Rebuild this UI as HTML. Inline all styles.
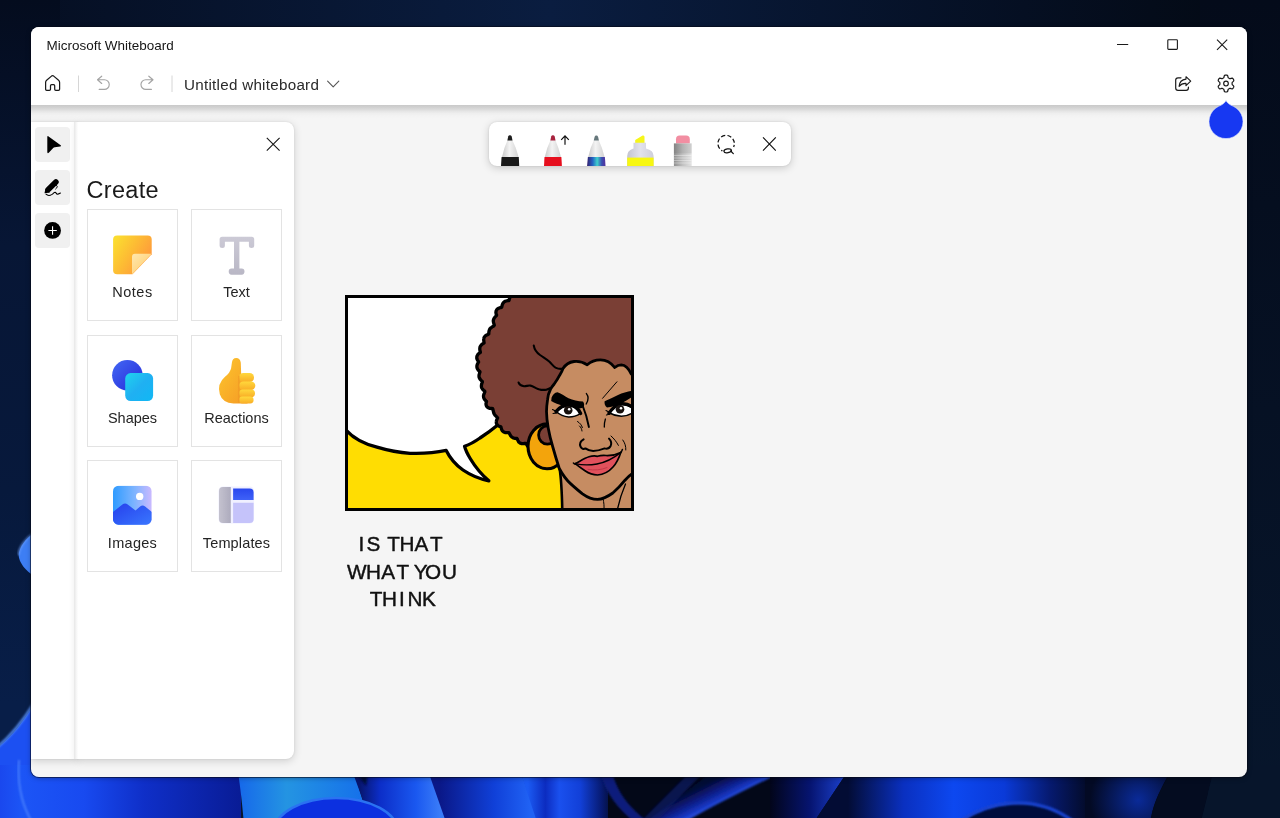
<!DOCTYPE html>
<html lang="en">
<head>
<meta charset="utf-8">
<title>Microsoft Whiteboard</title>
<style>
*{box-sizing:border-box;margin:0;padding:0}
html,body{width:1280px;height:818px;overflow:hidden;background:#050d1f;font-family:"Liberation Sans",sans-serif;color:#1b1b1b}
#wall{position:absolute;left:0;top:0;width:1280px;height:818px}
#win{will-change:transform;position:absolute;left:31px;top:27px;width:1216px;height:750px;background:#f5f5f5;border-radius:8px;overflow:hidden}
#winshadow{position:absolute;left:31px;top:27px;width:1216px;height:750px;border-radius:8px;box-shadow:0 0 0 1px rgba(6,10,24,.55),0 1px 5px rgba(0,0,0,.35)}
#hdr{position:absolute;left:0;top:0;width:100%;height:78px;background:#fff}
#hshadow{position:absolute;left:0;top:78px;width:100%;height:14px;background:linear-gradient(#c9c9c9 0%,#d2d2d2 18%,#dbdbdb 32%,#e6e6e6 46%,#eeeeee 60%,#f3f3f3 78%,#f5f5f5 100%)}
.abs{position:absolute}
#title{left:15.5px;top:10.5px;font-size:13.47px;line-height:16px;color:#151515;white-space:nowrap}
#doc{left:153px;top:48.8px;font-size:15.2px;line-height:18px;letter-spacing:.27px;color:#2a2a2a;white-space:nowrap}
#ovl{position:absolute;left:0;top:0;width:1216px;height:750px;pointer-events:none}
#side{position:absolute;left:0;top:95px;width:47px;height:637px;background:#fff;box-shadow:0 2px 8px rgba(0,0,0,.16),0 0 2px rgba(0,0,0,.10)}
.sbtn{position:absolute;left:4.2px;width:35px;height:34.5px;background:#f0f0f0;border-radius:4px}
#gut{position:absolute;left:42.8px;top:95px;width:4.2px;height:637px;z-index:3;background:linear-gradient(90deg,#e7e7e7 0%,#ededed 25%,#f6f6f6 60%,#fefefe 100%)}
#panel{position:absolute;left:46px;top:95px;width:217px;height:637px;background:#fff;border-radius:0 8px 8px 0;box-shadow:0 2px 8px rgba(0,0,0,.16),0 0 2px rgba(0,0,0,.10)}
#create{left:9.6px;top:53.5px;font-size:23.5px;line-height:28px;letter-spacing:.3px;color:#1a1a1a;white-space:nowrap}
.card{position:absolute;width:91px;height:112px;border:1px solid #e3e3e3;background:#fff}
.card span{position:absolute;left:0;width:100%;top:73px;text-align:center;font-size:14.5px;line-height:18px;color:#242424;white-space:nowrap}
.card svg{position:absolute;left:20px;top:20px;width:50px;height:50px}
#pens{position:absolute;left:458px;top:95px;width:302px;height:43.6px;background:#fff;border-radius:8px;box-shadow:0 2px 8px rgba(0,0,0,.18),0 0 2px rgba(0,0,0,.12);overflow:hidden}
#pens svg{position:absolute;left:0;top:0;width:302px;height:44px}
#comic{position:absolute;left:314px;top:268px;width:289px;height:216px}
</style>
</head>
<body>
<svg id="wall" viewBox="0 0 1280 818">
<defs>
<linearGradient id="wg" x1="0" y1="0" x2="1" y2="0"><stop offset="0" stop-color="#050e21"/><stop offset=".43" stop-color="#0a1d40"/><stop offset=".8" stop-color="#050f22"/><stop offset="1" stop-color="#030912"/></linearGradient>
<linearGradient id="wl" x1="0" y1="0" x2="0" y2="1"><stop offset="0" stop-color="#040c1e"/><stop offset=".3" stop-color="#071635"/><stop offset=".6" stop-color="#07193c"/><stop offset=".86" stop-color="#081e48"/></linearGradient>
<linearGradient id="wr" x1="0" y1="0" x2="0" y2="1"><stop offset="0" stop-color="#040b1a"/><stop offset=".5" stop-color="#061124"/><stop offset="1" stop-color="#07162c"/></linearGradient>
</defs>
<rect width="1280" height="818" fill="url(#wg)"/>
<rect x="0" y="0" width="60" height="818" fill="url(#wl)"/>
<rect x="1200" y="0" width="80" height="818" fill="url(#wr)"/>
<defs>
<filter id="b1" x="-10%" y="-10%" width="120%" height="120%"><feGaussianBlur stdDeviation="1.2"/></filter>
<filter id="b3" x="-10%" y="-10%" width="120%" height="120%"><feGaussianBlur stdDeviation="3"/></filter>
<linearGradient id="wA" gradientUnits="userSpaceOnUse" x1="0" y1="0" x2="240" y2="0"><stop offset="0" stop-color="#1a48ee"/><stop offset=".09" stop-color="#1c55f6"/><stop offset=".35" stop-color="#184af0"/><stop offset=".6" stop-color="#0f2fc8"/><stop offset="1" stop-color="#091c96"/></linearGradient>
<linearGradient id="wB" gradientUnits="userSpaceOnUse" x1="238" y1="0" x2="360" y2="0"><stop offset="0" stop-color="#1668ea"/><stop offset=".4" stop-color="#2494e2"/><stop offset="1" stop-color="#1672ea"/></linearGradient>
<linearGradient id="wC" gradientUnits="userSpaceOnUse" x1="360" y1="0" x2="440" y2="0"><stop offset="0" stop-color="#071670"/><stop offset=".25" stop-color="#0c2ec8"/><stop offset=".7" stop-color="#1a58f0"/><stop offset="1" stop-color="#3a7cf8"/></linearGradient>
<linearGradient id="wD" gradientUnits="userSpaceOnUse" x1="440" y1="0" x2="530" y2="0"><stop offset="0" stop-color="#0a1888"/><stop offset=".6" stop-color="#1040d8"/><stop offset="1" stop-color="#2062f4"/></linearGradient>
<linearGradient id="wE" gradientUnits="userSpaceOnUse" x1="528" y1="0" x2="615" y2="0"><stop offset="0" stop-color="#1b5af2"/><stop offset=".2" stop-color="#0c2cc0"/><stop offset=".36" stop-color="#1a50ee"/><stop offset=".6" stop-color="#1240d8"/><stop offset=".85" stop-color="#071a70"/><stop offset="1" stop-color="#030a20"/></linearGradient>
<linearGradient id="wF" gradientUnits="userSpaceOnUse" x1="681" y1="796" x2="692" y2="818"><stop offset="0" stop-color="#040a34"/><stop offset=".45" stop-color="#0b1c84"/><stop offset=".8" stop-color="#1736c0"/><stop offset="1" stop-color="#2c54e6"/></linearGradient>
<linearGradient id="wG" gradientUnits="userSpaceOnUse" x1="770" y1="0" x2="850" y2="0"><stop offset="0" stop-color="#02051a"/><stop offset=".5" stop-color="#061470"/><stop offset="1" stop-color="#1f48dc"/></linearGradient>
<linearGradient id="wH" gradientUnits="userSpaceOnUse" x1="848" y1="0" x2="1100" y2="0"><stop offset="0" stop-color="#030c34"/><stop offset=".22" stop-color="#0a30c0"/><stop offset=".42" stop-color="#0d48f0"/><stop offset=".62" stop-color="#0a3ad8"/><stop offset=".8" stop-color="#061a70"/><stop offset=".96" stop-color="#030a24"/><stop offset="1" stop-color="#030a24"/></linearGradient>
<radialGradient id="wI" gradientUnits="userSpaceOnUse" cx="1138" cy="800" r="48"><stop offset="0" stop-color="#0a2a98"/><stop offset="1" stop-color="#030a24"/></radialGradient>
</defs>
<!-- left blue mass -->
<path d="M-5 750 C10 738 22 724 34 704 L34 825 L-5 825Z" fill="#1c50f2"/>
<path d="M-5 749 C10 737 22 723 34 703" fill="none" stroke="#5a94ff" stroke-width="2.4" filter="url(#b1)"/>
<path d="M34 533 C26 538 19 547 18.6 555 C19 563 26 571 34 576Z" fill="#3d7ef4"/>
<path d="M34 533 C26 538 19 547 18.6 555" fill="none" stroke="#6ea2ff" stroke-width="1.4" filter="url(#b1)"/>
<!-- bottom strip -->
<g>
<rect x="-5" y="765" width="246" height="60" fill="url(#wA)"/>

<path d="M19 760 C17 785 22 805 32 822" fill="none" stroke="#5c92ff" stroke-width="1.6" filter="url(#b1)" opacity=".8"/>
<path d="M237 765 C240 785 242 800 244 825 L370 825 L352 765Z" fill="url(#wB)"/>
<path d="M350 765 L372 825 L450 825 L426 765Z" fill="url(#wC)"/>
<path d="M354 770 L368 770 L366 786 Z" fill="#04103a" filter="url(#b1)"/>
<ellipse cx="336" cy="832" rx="62" ry="34" fill="#0c30e0" stroke="#2a72f2" stroke-width="2.5"/>
<path d="M426 765 L447 825 L540 825 L518 765Z" fill="url(#wD)"/>
<path d="M518 765 L538 825 L630 825 L612 765Z" fill="url(#wE)"/>
<rect x="608" y="765" width="600" height="60" fill="#030818"/>
<path d="M640 826 L678 826 C712 806 745 790 782 772 L712 772Z" fill="url(#wF)" filter="url(#b1)"/>
<path d="M636 826 L652 826 L704 772 L690 772Z" fill="#0a1a66" opacity=".7" filter="url(#b1)"/><path d="M600 772 C606 795 620 812 640 826 L655 826 C632 812 618 795 612 772Z" fill="#0b1f7c" filter="url(#b1)"/>
<path d="M770 765 L770 825 L812 825 L852 765Z" fill="url(#wG)"/>
<path d="M852 765 L812 825 L1110 825 L1110 765Z" fill="url(#wH)"/>
<path d="M955 825 C985 802 1035 790 1078 825Z" fill="#030a3c" filter="url(#b1)"/>
<path d="M955 825 C985 802 1035 790 1078 825" fill="none" stroke="#1c48dc" stroke-width="3" filter="url(#b1)"/>
<path d="M1085 765 L1085 825 L1150 825 C1152 805 1160 790 1170 772 L1170 765Z" fill="url(#wI)"/>

<path d="M1150 825 C1152 805 1160 790 1172 770 L1176 765 L1215 765 L1200 825Z" fill="#040c20"/><path d="M1200 825 L1215 765 L1290 765 L1290 825Z" fill="#07152b"/>
</g>

</svg>
<div id="winshadow"></div>
<div id="win">
  <div id="hdr">
    <div id="title" class="abs">Microsoft Whiteboard</div>
    <div id="doc" class="abs">Untitled whiteboard</div>
  </div>
  <div id="hshadow"></div>

  <div id="side">
    <div class="sbtn" style="top:5px"></div>
    <div class="sbtn" style="top:48px"></div>
    <div class="sbtn" style="top:91px"></div>
  </div>
  <div id="gut"></div>

  <div id="panel">
    <div id="create" class="abs">Create</div>
    <div class="card" style="left:10px;top:87px"><span style="letter-spacing:.5px">Notes</span>
      <svg viewBox="108 230.2 50 50"><defs><linearGradient id="n1" x1="0" y1=".2" x2="1" y2=".8"><stop offset="0" stop-color="#fbdc30"/><stop offset=".45" stop-color="#fdba34"/><stop offset="1" stop-color="#ff8f3e"/></linearGradient><linearGradient id="n2" x1="0" y1="0" x2="1" y2="1"><stop offset="0" stop-color="#ffe7ae"/><stop offset=".5" stop-color="#ffd98a"/></linearGradient></defs>
      <path d="M117.1 235.7 H147.7 Q151.7 235.7 151.7 239.7 V254.5 L132.5 274.4 H117.1 Q113.1 274.4 113.1 270.4 V239.7 Q113.1 235.7 117.1 235.7Z" fill="url(#n1)"/>
      <path d="M135 253.9 H151.7 L132 274.4 V256.9 Q132 253.9 135 253.9Z" fill="url(#n2)"/></svg></div>
    <div class="card" style="left:114px;top:87px"><span>Text</span>
      <svg viewBox="211.5 229.7 50 50"><defs><linearGradient id="t1" x1="0" y1="0" x2="0" y2="1"><stop offset="0" stop-color="#cccad6"/><stop offset="1" stop-color="#b9b7c5"/></linearGradient></defs>
      <path d="M221.6 236.4 H251.2 Q253.7 236.4 253.7 238.9 V245.3 Q253.7 247.8 251 247.8 Q248.4 247.8 248.4 245.3 V241.4 H238.9 V268.3 H241.2 Q244 268.3 244 271.3 Q244 274.4 241.2 274.4 H231 Q228.2 274.4 228.2 271.3 Q228.2 268.3 231 268.3 H233.5 V241.4 H224.4 V245.3 Q224.4 247.8 221.8 247.8 Q219.1 247.8 219.1 245.3 V238.9 Q219.1 236.4 221.6 236.4Z" fill="url(#t1)"/></svg></div>
    <div class="card" style="left:10px;top:212.5px"><span>Shapes</span>
      <svg viewBox="108 355.7 50 50"><defs><linearGradient id="s1" x1="0" y1="0" x2="1" y2="1"><stop offset="0" stop-color="#4368f4"/><stop offset="1" stop-color="#2428d8"/></linearGradient><linearGradient id="s2" x1="0" y1="0" x2="1" y2="1"><stop offset="0" stop-color="#1fd3ee"/><stop offset=".5" stop-color="#20b0f2"/><stop offset="1" stop-color="#10b8f4"/></linearGradient></defs>
      <circle cx="127.4" cy="375" r="15.3" fill="url(#s1)"/><rect x="125.2" y="372.8" width="27.9" height="27.9" rx="5.5" fill="url(#s2)"/></svg></div>
    <div class="card" style="left:114px;top:212.5px"><span>Reactions</span>
      <svg viewBox="211.5 355.2 50 50"><defs><linearGradient id="r1" x1="0" y1="0" x2="1" y2="1"><stop offset="0" stop-color="#fdc62d"/><stop offset="1" stop-color="#f59a25"/></linearGradient><linearGradient id="r2" x1="0" y1="0" x2="0" y2="1"><stop offset="0" stop-color="#ffd83c"/><stop offset="1" stop-color="#f9ad27"/></linearGradient></defs>
      <path d="M231.4 362 Q231.8 357.3 235.7 357.3 Q239.7 357.3 240.3 362 L240.7 374 H247 V402.6 H233 Q222 402.2 219.3 393.5 Q216.3 383 224.5 376 Q229.6 372 230.6 367.5Z" fill="url(#r1)"/>
      <rect x="238.5" y="372.3" width="15" height="9" rx="4.3" fill="url(#r2)"/><rect x="238.5" y="380.6" width="16.3" height="8.6" rx="4.2" fill="url(#r2)"/><rect x="238.5" y="388.6" width="16" height="7.8" rx="3.9" fill="url(#r2)"/><rect x="238.5" y="395.8" width="14.6" height="6.9" rx="3.4" fill="url(#r2)"/>
      <path d="M238.4 375 V402" stroke="#ee9524" stroke-width="1.2" opacity=".7"/></svg></div>
    <div class="card" style="left:10px;top:338px"><span style="letter-spacing:.3px">Images</span>
      <svg viewBox="108.1 481.4 50 50"><defs><linearGradient id="i1" x1="0" y1="0" x2="1" y2="0"><stop offset="0" stop-color="#2f9bff"/><stop offset=".55" stop-color="#7db4ff"/><stop offset="1" stop-color="#cbb9ff"/></linearGradient><linearGradient id="i2" x1="0" y1="0" x2="1" y2="1"><stop offset="0" stop-color="#2640ec"/><stop offset="1" stop-color="#3a78ff"/></linearGradient><clipPath id="ic"><rect x="113.1" y="486.1" width="38.6" height="39" rx="5.5"/></clipPath></defs>
      <g clip-path="url(#ic)"><rect x="113" y="486" width="39" height="40" fill="url(#i1)"/>
      <path d="M113 512.5 L122.5 505 Q125.2 503 127.8 505 L135.6 510.8 L140.2 506.8 Q142.7 505 145.2 506.8 L152 512.5 V526 H113Z" fill="url(#i2)"/>
      <circle cx="139.8" cy="496.8" r="3.7" fill="#fff"/></g></svg></div>
    <div class="card" style="left:114px;top:338px"><span style="letter-spacing:.15px">Templates</span>
      <svg viewBox="212.1 480.7 50 50"><defs><linearGradient id="p1" x1="0" y1="0" x2="1" y2="0"><stop offset="0" stop-color="#c4c2cf"/><stop offset="1" stop-color="#adabbd"/></linearGradient><linearGradient id="p2" x1="0" y1="0" x2="0" y2="1"><stop offset="0" stop-color="#2947ee"/><stop offset="1" stop-color="#3f62f8"/></linearGradient></defs>
      <rect x="218.6" y="486.2" width="35.6" height="37" rx="4.5" fill="#f0f0ff"/>
      <path d="M223 486.7 H230.9 V522.7 H223 Q219.1 522.7 219.1 518.7 V490.7 Q219.1 486.7 223 486.7Z" fill="url(#p1)"/>
      <path d="M233.2 488.1 H249.7 Q253.7 488.1 253.7 492.1 V499.8 H233.2Z" fill="url(#p2)"/>
      <path d="M233.2 502.5 H253.7 V518.7 Q253.7 522.7 249.7 522.7 H233.2Z" fill="#c5c3fa"/></svg></div>
  </div>

  <div id="pens">
  <svg viewBox="489 122 302 44">
    <defs>
      <linearGradient id="cone" x1="0" y1="0" x2="1" y2="0"><stop offset="0" stop-color="#c9c9c9"/><stop offset=".45" stop-color="#f3f3f3"/><stop offset="1" stop-color="#d2d2d2"/></linearGradient>
      <linearGradient id="gal" x1="0" y1="0" x2="1" y2="0"><stop offset="0" stop-color="#35206e"/><stop offset=".3" stop-color="#2463c4"/><stop offset=".55" stop-color="#3fd0cc"/><stop offset=".8" stop-color="#3a4cb0"/><stop offset="1" stop-color="#55309c"/></linearGradient>
      <linearGradient id="era" x1="0" y1="0" x2="1" y2="0"><stop offset="0" stop-color="#8f8f8f"/><stop offset=".5" stop-color="#c2c2c2"/><stop offset="1" stop-color="#e2e2e2"/></linearGradient>
      <linearGradient id="hl" x1="0" y1="0" x2="1" y2="0"><stop offset="0" stop-color="#c4c4d0"/><stop offset=".5" stop-color="#e2e2ec"/><stop offset="1" stop-color="#cfcfda"/></linearGradient>
    </defs>
    <!-- black pen -->
    <path d="M509.9 135.2 Q511.2 135.2 511.7 136.6 L512.4 140.2 Q516.5 148 518.6 157 H502 Q503.8 148 507.5 140.2 L508.2 136.6 Q508.7 135.2 509.9 135.2Z" fill="url(#cone)"/>
    <path d="M509.9 135.2 Q511.2 135.2 511.7 136.6 L512.5 140.4 H507.4 L508.2 136.6 Q508.7 135.2 509.9 135.2Z" fill="#1d1d1d"/>
    <path d="M501.6 157 H518.8 L519.2 166 H501 Z" fill="#191919"/>
    <!-- red pen -->
    <path d="M552.9 135.2 Q554.2 135.2 554.7 136.6 L555.4 140.2 Q558.9 148 561 157 H544.8 Q546.6 148 550.5 140.2 L551.2 136.6 Q551.7 135.2 552.9 135.2Z" fill="url(#cone)"/>
    <path d="M552.9 135.2 Q554.2 135.2 554.7 136.6 L555.5 140.4 H550.4 L551.2 136.6 Q551.7 135.2 552.9 135.2Z" fill="#a8233e"/>
    <path d="M544.5 157 H561.4 L561.9 166 H544 Z" fill="#e60f1e"/>
    <path d="M565 144.8 V136 M561.2 139.9 L565 135.9 L568.8 139.9" fill="none" stroke="#111" stroke-width="1.2"/>
    <!-- galaxy pen -->
    <path d="M596.3 135.5 Q597.6 135.5 598.1 136.9 L598.8 140.2 Q602.5 148 604.6 157 H588.2 Q590.0 148 593.9 140.2 L594.6 136.9 Q595.1 135.5 596.3 135.5Z" fill="url(#cone)"/>
    <path d="M596.3 135.5 Q597.6 135.5 598.1 136.9 L598.9 140.4 H593.8 L594.6 136.9 Q595.1 135.5 596.3 135.5Z" fill="#66787c"/>
    <path d="M587.9 157 H604.9 L605.5 166 H587.1 Z" fill="url(#gal)"/>
    <!-- highlighter -->
    <path d="M635.2 140 L642.6 135.6 Q644.5 135 644.5 137 V143 H635.2Z" fill="#f6f61a"/>
    <path d="M633.5 142.8 H646 V148.6 Q653.6 150.6 653.6 156 V166 H627.2 V156 Q627.2 150.6 633.5 148.6Z" fill="url(#hl)"/>
    <rect x="627.2" y="157.6" width="26.4" height="9" fill="#f7f712"/>
    <!-- eraser -->
    <path d="M676 143.6 V139.2 Q676 135.6 679.6 135.6 H686.2 Q689.8 135.6 689.8 139.2 V143.6Z" fill="#f28ea2"/>
    <rect x="673.9" y="143.4" width="17.8" height="23" fill="url(#era)"/>
    <rect x="673.9" y="143.4" width="17.8" height="10" fill="#000" opacity=".08"/>
    <path d="M674 155.5 H691.6 M674 158 H691.6 M674 160.5 H691.6 M674 163 H691.6" stroke="#fff" stroke-width=".8" opacity=".45"/>
    <!-- lasso -->
    <path d="M733.6 147 A8.2 8.2 0 1 0 722.4 150.9" fill="none" stroke="#111" stroke-width="1.25" stroke-dasharray="4.2 2.2" stroke-dashoffset="2"/>
    <ellipse cx="727.7" cy="150.8" rx="3.8" ry="1.9" transform="rotate(-10 727.7 150.8)" fill="none" stroke="#111" stroke-width="1.25"/>
    <path d="M730.7 151 L733.3 153.6" fill="none" stroke="#111" stroke-width="1.25" stroke-linecap="round"/>
    <!-- close -->
    <path d="M763 137.4 L775.8 150.6 M775.8 137.4 L763 150.6" stroke="#111" stroke-width="1.15" fill="none"/>
  </svg>
  </div>

  <svg id="comic" viewBox="345 295 289 216">
<defs><clipPath id="cf"><rect x="346.5" y="296.5" width="286" height="213"/></clipPath></defs>
<rect x="345" y="295" width="289" height="216" fill="#fff"/>
<g clip-path="url(#cf)" stroke-linecap="round" stroke-linejoin="round">
<path d="M346 430 C354 439 365 444 377 447.2 C388 450.5 398 452.6 410 453.3 C424 453.8 436 452.6 446.2 450.4 C450 458 456 465 463 470 C471 475.5 480 479 488.8 480.8 C481 474 475 466.5 470.5 459 C467.5 454 465.5 450 464.6 446.3 C470 444.5 475 441.5 480 438 C487 433.5 493 429 499 424 L560 424 L640 424 L640 515 L340 515 L340 430 Z" fill="#ffdd02"/>
<path d="M346 430 C354 439 365 444 377 447.2 C388 450.5 398 452.6 410 453.3 C424 453.8 436 452.6 446.2 450.4 C450 458 456 465 463 470 C471 475.5 480 479 488.8 480.8 C481 474 475 466.5 470.5 459 C467.5 454 465.5 450 464.6 446.3 C470 444.5 475 441.5 480 438 C487 433.5 493 429 499 424" fill="none" stroke="#000" stroke-width="3.3"/>
<path d="M516.6 293.7 L515.9 293.8 515.2 293.9 514.5 294.0 513.8 294.1 513.1 294.3 512.5 294.6 512.0 294.8 511.5 295.2 511.0 295.6 510.7 296.1 510.3 296.6 510.0 297.1 509.8 297.8 509.5 298.4 509.3 299.1 509.2 299.8 508.9 300.5 508.2 300.5 507.5 300.7 506.8 300.8 506.1 301.0 505.5 301.2 504.9 301.4 504.4 301.8 503.9 302.2 503.5 302.6 503.1 303.1 502.8 303.6 502.5 304.2 502.3 304.8 502.1 305.5 501.9 306.2 501.8 306.9 501.5 307.4 500.8 307.6 500.0 307.7 499.4 307.9 498.7 308.2 498.1 308.5 497.6 308.9 497.1 309.3 496.7 309.8 496.4 310.4 496.1 311.0 496.0 311.7 495.9 312.4 496.0 313.1 496.1 313.8 496.3 314.5 496.6 315.1 496.4 315.7 495.9 316.2 495.4 316.7 494.9 317.2 494.5 317.7 494.1 318.3 493.8 318.8 493.6 319.4 493.4 320.0 493.3 320.6 493.3 321.2 493.4 321.8 493.5 322.4 493.7 323.1 493.9 323.8 494.1 324.5 494.3 325.2 494.0 325.7 493.4 326.2 492.8 326.5 492.2 326.9 491.6 327.3 491.1 327.6 490.7 328.0 490.3 328.4 489.9 328.9 489.6 329.4 489.4 329.9 489.2 330.5 489.0 331.2 488.9 331.9 488.8 332.6 488.8 333.3 488.8 334.0 488.2 334.4 487.6 334.6 486.9 334.9 486.3 335.2 485.7 335.6 485.2 336.0 484.8 336.5 484.4 337.0 484.1 337.6 483.9 338.1 483.8 338.8 483.7 339.4 483.7 340.1 483.8 340.8 483.9 341.5 484.0 342.2 484.1 342.9 483.5 343.3 482.9 343.7 482.3 344.1 481.8 344.5 481.3 345.0 480.9 345.5 480.5 346.0 480.2 346.5 480.0 347.1 479.9 347.7 479.8 348.3 479.8 348.9 479.8 349.6 479.9 350.3 480.1 351.0 480.3 351.7 480.4 352.4 479.8 352.8 479.2 353.2 478.7 353.7 478.2 354.2 477.7 354.7 477.4 355.3 477.1 355.8 476.9 356.4 476.8 357.1 476.8 357.7 476.8 358.4 477.0 359.0 477.3 359.7 477.6 360.3 478.0 360.9 478.4 361.5 478.6 362.1 478.2 362.7 477.8 363.3 477.5 363.9 477.3 364.6 477.0 365.2 476.9 365.9 476.9 366.5 476.9 367.1 477.0 367.7 477.2 368.3 477.5 368.9 477.8 369.4 478.2 370.0 478.7 370.5 479.2 371.0 479.8 371.5 480.0 372.1 479.7 372.7 479.5 373.4 479.3 374.1 479.1 374.8 479.0 375.4 479.0 376.0 479.0 376.6 479.1 377.2 479.3 377.8 479.6 378.4 479.9 378.9 480.3 379.4 480.7 379.9 481.2 380.4 481.8 380.9 482.3 381.4 482.4 382.0 482.1 382.7 481.9 383.4 481.7 384.1 481.5 384.7 481.4 385.4 481.4 386.0 481.4 386.6 481.5 387.2 481.7 387.8 482.0 388.3 482.4 388.9 482.8 389.4 483.2 389.9 483.8 390.4 484.3 390.9 484.8 391.3 484.8 392.0 484.5 392.7 484.3 393.3 484.0 394.0 483.8 394.6 483.6 395.2 483.5 395.8 483.5 396.4 483.6 397.0 483.7 397.6 483.9 398.2 484.2 398.8 484.5 399.4 485.0 399.9 485.5 400.5 486.0 401.0 486.5 401.4 486.4 402.1 486.2 402.7 486.0 403.5 486.0 404.2 486.1 404.9 486.3 405.6 486.6 406.2 487.0 406.8 487.5 407.2 488.0 407.6 488.6 407.9 489.2 408.1 489.9 408.3 490.5 408.4 491.3 408.5 492.0 408.5 492.7 408.6 492.9 409.3 493.1 410.1 493.2 410.7 493.4 411.4 493.5 412.0 493.7 412.6 493.8 413.1 494.0 413.6 494.2 414.0 494.5 414.5 494.9 415.0 495.2 415.4 495.7 415.9 496.2 416.4 496.7 416.9 497.2 417.4 497.6 418.0 497.3 418.6 497.0 419.3 496.7 420.0 496.5 420.6 496.4 421.3 496.3 421.9 496.3 422.6 496.4 423.2 496.6 423.8 497.0 424.4 497.4 425.0 497.9 425.5 498.5 425.9 499.2 426.2 499.8 426.4 500.5 426.6 501.0 427.0 501.1 427.7 501.3 428.4 501.5 429.1 501.7 429.7 502.1 430.3 502.4 430.8 502.9 431.3 503.3 431.7 503.8 432.0 504.4 432.3 505.0 432.5 505.6 432.6 506.3 432.7 507.1 432.7 507.8 432.7 508.5 432.6 509.0 432.8 509.4 433.5 509.7 434.1 510.1 434.7 510.4 435.3 510.7 435.8 511.1 436.3 511.5 436.7 511.9 437.1 512.4 437.4 512.9 437.7 513.5 438.0 514.1 438.2 514.8 438.3 515.5 438.4 516.2 438.5 517.0 438.5 517.3 439.0 517.6 439.7 517.8 440.3 518.2 441.0 518.5 441.6 518.9 442.1 519.4 442.5 519.9 442.9 520.5 443.2 521.1 443.4 521.7 443.6 522.3 443.6 523.0 443.6 523.7 443.6 524.4 443.5 525.1 443.4 525.8 443.3 526.2 443.8 526.6 444.4 526.9 445.1 527.3 445.7 527.7 446.2 528.1 446.7 528.5 447.1 529.0 447.5 529.5 447.8 530.1 448.0 530.7 448.2 531.3 448.3 532.0 448.4 532.7 448.4 533.4 448.3 534.1 448.3 534.9 448.2 L560 470 L640 470 L640 290 Z" fill="#7a3f35"/>
<path d="M516.6 293.7 L515.9 293.8 515.2 293.9 514.5 294.0 513.8 294.1 513.1 294.3 512.5 294.6 512.0 294.8 511.5 295.2 511.0 295.6 510.7 296.1 510.3 296.6 510.0 297.1 509.8 297.8 509.5 298.4 509.3 299.1 509.2 299.8 508.9 300.5 508.2 300.5 507.5 300.7 506.8 300.8 506.1 301.0 505.5 301.2 504.9 301.4 504.4 301.8 503.9 302.2 503.5 302.6 503.1 303.1 502.8 303.6 502.5 304.2 502.3 304.8 502.1 305.5 501.9 306.2 501.8 306.9 501.5 307.4 500.8 307.6 500.0 307.7 499.4 307.9 498.7 308.2 498.1 308.5 497.6 308.9 497.1 309.3 496.7 309.8 496.4 310.4 496.1 311.0 496.0 311.7 495.9 312.4 496.0 313.1 496.1 313.8 496.3 314.5 496.6 315.1 496.4 315.7 495.9 316.2 495.4 316.7 494.9 317.2 494.5 317.7 494.1 318.3 493.8 318.8 493.6 319.4 493.4 320.0 493.3 320.6 493.3 321.2 493.4 321.8 493.5 322.4 493.7 323.1 493.9 323.8 494.1 324.5 494.3 325.2 494.0 325.7 493.4 326.2 492.8 326.5 492.2 326.9 491.6 327.3 491.1 327.6 490.7 328.0 490.3 328.4 489.9 328.9 489.6 329.4 489.4 329.9 489.2 330.5 489.0 331.2 488.9 331.9 488.8 332.6 488.8 333.3 488.8 334.0 488.2 334.4 487.6 334.6 486.9 334.9 486.3 335.2 485.7 335.6 485.2 336.0 484.8 336.5 484.4 337.0 484.1 337.6 483.9 338.1 483.8 338.8 483.7 339.4 483.7 340.1 483.8 340.8 483.9 341.5 484.0 342.2 484.1 342.9 483.5 343.3 482.9 343.7 482.3 344.1 481.8 344.5 481.3 345.0 480.9 345.5 480.5 346.0 480.2 346.5 480.0 347.1 479.9 347.7 479.8 348.3 479.8 348.9 479.8 349.6 479.9 350.3 480.1 351.0 480.3 351.7 480.4 352.4 479.8 352.8 479.2 353.2 478.7 353.7 478.2 354.2 477.7 354.7 477.4 355.3 477.1 355.8 476.9 356.4 476.8 357.1 476.8 357.7 476.8 358.4 477.0 359.0 477.3 359.7 477.6 360.3 478.0 360.9 478.4 361.5 478.6 362.1 478.2 362.7 477.8 363.3 477.5 363.9 477.3 364.6 477.0 365.2 476.9 365.9 476.9 366.5 476.9 367.1 477.0 367.7 477.2 368.3 477.5 368.9 477.8 369.4 478.2 370.0 478.7 370.5 479.2 371.0 479.8 371.5 480.0 372.1 479.7 372.7 479.5 373.4 479.3 374.1 479.1 374.8 479.0 375.4 479.0 376.0 479.0 376.6 479.1 377.2 479.3 377.8 479.6 378.4 479.9 378.9 480.3 379.4 480.7 379.9 481.2 380.4 481.8 380.9 482.3 381.4 482.4 382.0 482.1 382.7 481.9 383.4 481.7 384.1 481.5 384.7 481.4 385.4 481.4 386.0 481.4 386.6 481.5 387.2 481.7 387.8 482.0 388.3 482.4 388.9 482.8 389.4 483.2 389.9 483.8 390.4 484.3 390.9 484.8 391.3 484.8 392.0 484.5 392.7 484.3 393.3 484.0 394.0 483.8 394.6 483.6 395.2 483.5 395.8 483.5 396.4 483.6 397.0 483.7 397.6 483.9 398.2 484.2 398.8 484.5 399.4 485.0 399.9 485.5 400.5 486.0 401.0 486.5 401.4 486.4 402.1 486.2 402.7 486.0 403.5 486.0 404.2 486.1 404.9 486.3 405.6 486.6 406.2 487.0 406.8 487.5 407.2 488.0 407.6 488.6 407.9 489.2 408.1 489.9 408.3 490.5 408.4 491.3 408.5 492.0 408.5 492.7 408.6 492.9 409.3 493.1 410.1 493.2 410.7 493.4 411.4 493.5 412.0 493.7 412.6 493.8 413.1 494.0 413.6 494.2 414.0 494.5 414.5 494.9 415.0 495.2 415.4 495.7 415.9 496.2 416.4 496.7 416.9 497.2 417.4 497.6 418.0 497.3 418.6 497.0 419.3 496.7 420.0 496.5 420.6 496.4 421.3 496.3 421.9 496.3 422.6 496.4 423.2 496.6 423.8 497.0 424.4 497.4 425.0 497.9 425.5 498.5 425.9 499.2 426.2 499.8 426.4 500.5 426.6 501.0 427.0 501.1 427.7 501.3 428.4 501.5 429.1 501.7 429.7 502.1 430.3 502.4 430.8 502.9 431.3 503.3 431.7 503.8 432.0 504.4 432.3 505.0 432.5 505.6 432.6 506.3 432.7 507.1 432.7 507.8 432.7 508.5 432.6 509.0 432.8 509.4 433.5 509.7 434.1 510.1 434.7 510.4 435.3 510.7 435.8 511.1 436.3 511.5 436.7 511.9 437.1 512.4 437.4 512.9 437.7 513.5 438.0 514.1 438.2 514.8 438.3 515.5 438.4 516.2 438.5 517.0 438.5 517.3 439.0 517.6 439.7 517.8 440.3 518.2 441.0 518.5 441.6 518.9 442.1 519.4 442.5 519.9 442.9 520.5 443.2 521.1 443.4 521.7 443.6 522.3 443.6 523.0 443.6 523.7 443.6 524.4 443.5 525.1 443.4 525.8 443.3 526.2 443.8 526.6 444.4 526.9 445.1 527.3 445.7 527.7 446.2 528.1 446.7 528.5 447.1 529.0 447.5 529.5 447.8 530.1 448.0 530.7 448.2 531.3 448.3 532.0 448.4 532.7 448.4 533.4 448.3 534.1 448.3 534.9 448.2" fill="none" stroke="#000" stroke-width="3.3"/>
<path d="M533.8 345.6 C534.5 350 536.5 352.5 540 355 C544 357.8 547 359.5 549.5 361.8 C552 364.3 553.5 366.5 555.5 367.6 C558 368.8 560.5 369.2 563 368.6" fill="none" stroke="#000" stroke-width="2.1"/>
<path d="M518.6 382.6 C519.5 385 521.5 386 524 386.2 C526.5 386.3 528 385.2 530.5 385.6 C533.5 386.2 535 388 538 389 C541 390 544 390 546.5 389.6 C548 389.3 549 388.8 550 388.2" fill="none" stroke="#000" stroke-width="2.1"/>
<ellipse cx="547" cy="446.3" rx="19" ry="22.4" fill="#f3a40c" stroke="#000" stroke-width="3.1"/>
<ellipse cx="547.4" cy="435" rx="8.8" ry="9.1" fill="#7a3f35" stroke="#000" stroke-width="2.8"/>
<path d="M559.5 468 C561.5 480 562 495 562.3 512 L640 512 L640 470 Z" fill="#c68c62" stroke="#000" stroke-width="2.6"/>
<path d="M625.5 484 C622 492 619.5 500 617.5 509" fill="none" stroke="#000" stroke-width="1.3"/>
<path d="M603 498.5 C604 503 604.2 506 604 509" fill="none" stroke="#000" stroke-width="1"/>
<path d="M636 378 L631.2 374 C629 369 625.5 365 621.3 364.8 C618.5 364.8 616.5 366 614.7 367.5 C611 362.5 606 359.8 600.4 359.8 C595 359.8 590.5 361.8 587.2 364.8 C583 362 578.5 361 574 361.5 C569.5 362 565.5 364.5 563 368.6 C562.2 371 561 373 559.7 375.2 C558 378.5 556 381.5 554.2 384 C552.5 386 551.2 387.8 550.4 389.5 C548.6 393 547.8 396 547.6 399.4 C547 403.5 546.5 407.5 546.5 411.5 C546.6 417 547.2 422.5 548.2 428 C549.4 434.5 551 441 552.8 447 C554.6 453.5 556.5 460 559.3 468.5 C562.5 474.5 566 479.5 570.5 483.6 C574.5 487.2 578.5 490.8 582.5 493.8 C587 497 592 499.4 597.5 499.4 C603 499.2 608 496.4 612.8 493 C617.5 489 621.5 484.6 625 480.2 C627.5 477.4 630 474.8 636 471 Z" fill="#c68c62" stroke="#000" stroke-width="2.8"/>
<path d="M551.6 397.6 C552.6 394.8 554.6 392.6 557.5 392.2 C561.5 393.6 565 396.4 568.5 398.2 C573 400.3 578 401.2 583 401.4 C584.6 403.4 584.4 406 583.2 407.4 C580.8 408.5 578.6 408.6 576.2 408.3 C571.6 407.9 567.2 406.9 563 405.8 C558.6 404.6 554.8 403 551.2 401 Z" fill="#000"/>
<path d="M604.6 401.2 C609 399.4 613.6 397.2 618 395 C622.4 393 627 391.6 632 390.8 L632 397 C628 399.6 624 401.8 620.2 403.9 C616 405.8 611.6 407 607 407.4 C605 406 604.2 403.6 604.6 401.2 Z" fill="#000"/>
<path d="M556.5 411.8 C560 407.6 564.4 405.6 569 405.8 C574 406 577.6 408.8 580.2 413.6 C576.6 416 572.6 417 568.5 416.9 C563.8 416.6 559.8 414.8 556.5 411.8 Z" fill="#fff" stroke="#000" stroke-width="1.5"/>
<path d="M556 411.6 C560 406.8 564.4 404.8 569 405 C574 405.2 578 408 580.6 413.4" fill="none" stroke="#000" stroke-width="3.4"/>
<circle cx="568.2" cy="410.2" r="4.3" fill="#17110e"/><circle cx="569.2" cy="409.2" r="1.3" fill="#fff"/>
<path d="M609.6 413 C613 408 616.4 405.4 621 404.6 C625.4 404 629 405.6 633 408.2 L633 413 C629.6 415 625.6 416.2 621.3 416.2 C617 416 613 415 609.6 413 Z" fill="#fff" stroke="#000" stroke-width="1.5"/>
<path d="M609 413.2 C612.6 407.6 616.4 404.6 621 403.8 C625.4 403.2 629 404.6 633 407.4" fill="none" stroke="#000" stroke-width="3.4"/>
<circle cx="620" cy="409.2" r="4.3" fill="#17110e"/><circle cx="621" cy="408.2" r="1.3" fill="#fff"/>
<path d="M556.5 411.5 L552.5 409.5 M557 413 L553 413.5 M609.8 412.6 L606 410.6 M610 414 L606.4 415" stroke="#000" stroke-width="1.1" fill="none"/>
<path d="M616.9 381.8 L602.6 398.3" stroke="#000" stroke-width="1" fill="none"/>
<path d="M586.4 393.6 C588.4 396 588.6 400 586.2 404" stroke="#000" stroke-width="1.4" fill="none"/>
<path d="M582.8 406.2 C585.2 412 587.4 419 588.9 427" stroke="#000" stroke-width="1.9" fill="none"/>
<path d="M605.4 419 C604.6 421.6 604.2 424.4 604.3 427" stroke="#000" stroke-width="1.3" fill="none"/>
<path d="M577.5 421.5 C580 423 581.6 425 582.4 427.6 M579.5 426 C581 427.4 581.8 429 582 431" stroke="#000" stroke-width="1" fill="none"/>
<path d="M583.6 439.4 C580.6 441 579.4 444 580.6 446.8 C581.6 448.8 583.6 449.4 585.4 448.4 C587.6 450 590.4 451 593.2 451 C597 451 601 449.8 604.6 448.4 C607 449 609.4 448.2 610.6 446 C611.8 443.4 611 440.6 609 438.6" stroke="#000" stroke-width="2" fill="none"/>
<path d="M611 436 C614 438.6 616.4 441.6 618.4 445.4" stroke="#000" stroke-width="1" fill="none"/>
<path d="M575.2 463.6 C580 461.2 584.5 458.2 589 456.8 C592 455.9 595 455.7 597.5 456.3 C600 455.5 603 455.3 606 455.5 C611 455.7 616 454.8 620.8 452.4 C619 458 616.5 463 613 467 C609.5 471 603.5 474.6 597.5 475 C592.5 475 588.5 473.2 585 470.8 C581.5 468.4 578.2 466 575.2 463.6 Z" fill="#e0515c" stroke="#000" stroke-width="1.7"/>
<path d="M575.2 463.6 C582 465.2 590 465.2 597 464 C605.5 462.4 613.5 458.4 620.8 452.4" stroke="#000" stroke-width="1.4" fill="none"/>
<path d="M588 469.4 C594 470.6 601 470 607 467.6" stroke="#c23a48" stroke-width="1" fill="none"/>
<path d="M620.6 452.6 C621.6 451.6 622.2 450.6 622.4 449.4 M573.4 463 C574 463.6 574.6 464 575.4 464.2" stroke="#000" stroke-width="1.5" fill="none"/>
<path d="M622.8 440 C625 443 626 446.4 625.8 450" stroke="#000" stroke-width="1" fill="none"/>
</g>
<rect x="346.5" y="296.5" width="286" height="213" fill="none" stroke="#000" stroke-width="3"/>
</svg>

  <svg id="ovl" viewBox="31 27 1216 750" fill="none">
    <g font-family="'Liberation Sans',sans-serif" font-size="20.7" fill="#111" stroke="#111" stroke-width=".45" stroke-linejoin="round">
<text x="358.4 366.5 381.0 387.3 399.5 414.5 429.9" y="551.3">IS THAT</text>
<text x="346.9 366.1 381.3 396.6 409.0 413.7 425.1 441.9" y="578.8">WHAT YOU</text>
<text x="369.8 382.0 399.0 407.4 422.0" y="606.3">THINK</text>
</g>
    <!-- window controls -->
    <path d="M1117 44.5 H1128.2" stroke="#1a1a1a" stroke-width="1.1"/>
    <rect x="1167.8" y="39.8" width="9.6" height="9.6" rx=".8" stroke="#1a1a1a" stroke-width="1.1"/>
    <path d="M1217 39.6 L1227.2 49.8 M1227.2 39.6 L1217 49.8" stroke="#1a1a1a" stroke-width="1.1"/>
    <!-- home -->
    <path d="M45.6 82.4 Q45.6 81.1 46.6 80.3 L51.5 76.1 Q52.6 75.2 53.7 76.1 L58.6 80.3 Q59.6 81.1 59.6 82.4 V89.2 Q59.6 90.3 58.5 90.3 H55.8 Q54.7 90.3 54.7 89.2 V85.8 Q54.7 84.7 53.6 84.7 H51.6 Q50.5 84.7 50.5 85.8 V89.2 Q50.5 90.3 49.4 90.3 H46.7 Q45.6 90.3 45.6 89.2Z" stroke="#1a1a1a" stroke-width="1.25" stroke-linejoin="round"/>
    <path d="M78.5 75.5 V92 M172 75.5 V92" stroke="#d6d6d6" stroke-width="1"/>
    <!-- undo / redo -->
    <path d="M101.7 76.2 L97.5 79.7 L101.7 83.5 M97.7 79.7 H104.4 A4.85 4.85 0 0 1 104.4 89.4 H99.2" stroke="#a4a4a4" stroke-width="1.15" stroke-linecap="round" stroke-linejoin="round"/>
    <path d="M148.8 76.2 L153 79.7 L148.8 83.5 M152.8 79.7 H145.8 A4.85 4.85 0 0 0 145.8 89.4 H151.4" stroke="#a4a4a4" stroke-width="1.15" stroke-linecap="round" stroke-linejoin="round"/>
    <!-- chevron -->
    <path d="M327.6 81.2 L333.2 86.8 L338.8 81.2" stroke="#555" stroke-width="1.1" stroke-linecap="round" stroke-linejoin="round"/>
    <!-- share -->
    <path d="M1181 77.8 H1178 Q1175.7 77.8 1175.7 80.1 V88 Q1175.7 90.3 1178 90.3 H1186.1 Q1188.4 90.3 1188.4 88 V87.2" stroke="#1a1a1a" stroke-width="1.2" stroke-linecap="round"/>
    <path d="M1186 76.7 L1190.7 81.2 L1186 85.7 V83.4 C1183 83.2 1180.8 84.3 1179.1 86.4 C1179.4 82.3 1181.9 79.5 1186 79.1Z" stroke="#1a1a1a" stroke-width="1.15" stroke-linejoin="round"/>
    <!-- gear -->
    <g transform="translate(1226 83.5)"><path d="M6.10 0.00 L6.10 0.40 L6.12 0.81 L6.33 1.26 L7.05 1.89 L7.71 2.62 L7.78 3.22 L7.61 3.75 L7.36 4.25 L7.06 4.72 L6.68 5.13 L6.12 5.37 L5.16 5.16 L4.26 4.85 L3.76 4.90 L3.40 5.08 L3.05 5.28 L2.70 5.48 L2.36 5.71 L2.07 6.11 L1.89 7.05 L1.59 7.99 L1.10 8.35 L0.56 8.47 L0.00 8.50 L-0.56 8.47 L-1.10 8.35 L-1.59 7.99 L-1.89 7.05 L-2.07 6.11 L-2.36 5.71 L-2.70 5.48 L-3.05 5.28 L-3.40 5.08 L-3.76 4.90 L-4.26 4.85 L-5.16 5.16 L-6.12 5.37 L-6.68 5.13 L-7.06 4.72 L-7.36 4.25 L-7.61 3.75 L-7.78 3.22 L-7.71 2.62 L-7.05 1.89 L-6.33 1.26 L-6.12 0.81 L-6.10 0.40 L-6.10 0.00 L-6.10 -0.40 L-6.12 -0.81 L-6.33 -1.26 L-7.05 -1.89 L-7.71 -2.62 L-7.78 -3.22 L-7.61 -3.75 L-7.36 -4.25 L-7.06 -4.72 L-6.68 -5.13 L-6.12 -5.37 L-5.16 -5.16 L-4.26 -4.85 L-3.76 -4.90 L-3.40 -5.08 L-3.05 -5.28 L-2.70 -5.48 L-2.36 -5.71 L-2.07 -6.11 L-1.89 -7.05 L-1.59 -7.99 L-1.10 -8.35 L-0.56 -8.47 L-0.00 -8.50 L0.56 -8.47 L1.10 -8.35 L1.59 -7.99 L1.89 -7.05 L2.07 -6.11 L2.36 -5.71 L2.70 -5.48 L3.05 -5.28 L3.40 -5.08 L3.76 -4.90 L4.26 -4.85 L5.16 -5.16 L6.12 -5.37 L6.68 -5.13 L7.06 -4.72 L7.36 -4.25 L7.61 -3.75 L7.78 -3.22 L7.71 -2.62 L7.05 -1.89 L6.33 -1.26 L6.12 -0.81 L6.10 -0.40Z" stroke="#1a1a1a" stroke-width="1.2" stroke-linejoin="round"/><circle r="2.3" stroke="#1a1a1a" stroke-width="1.2"/></g>
    <!-- blue drop -->
    <path d="M1226 100.6 C1227.3 103 1229.8 105 1233.4 106.3 A17 17 0 1 1 1218.6 106.3 C1222.2 105 1224.7 103 1226 100.6Z" fill="#1738f2" stroke="#e8ecff" stroke-width=".6"/>
    <!-- sidebar icons -->
    <path d="M47.3 137.2 Q47.3 135.5 48.6 136.4 L60.7 145.3 Q61.7 146.3 60.2 146.6 L54.8 147.2 Q53.8 147.3 53.2 148.1 L49 152.6 Q47.3 153.9 47.3 152Z" fill="#000"/>
    <path d="M55.9 181.9 L48.3 189.5" stroke="#000" stroke-width="5.6" stroke-linecap="round"/>
    <path d="M44.5 193.3 L45.4 188.6 L50 192.4Z" fill="#000"/>
    <path d="M56.6 185.4 Q58 186.6 56.8 187.8 L55.6 189" stroke="#000" stroke-width="1" stroke-linecap="round"/>
    <path d="M46 194.2 C47.6 195.8 50.2 195.6 52 194.4 C53.4 193.4 54.2 192 55.2 192.2 C56.2 192.6 56.2 194 57.4 194.2 C58.6 194.3 59.4 193.6 60.4 193" stroke="#000" stroke-width="1.1" stroke-linecap="round"/>
    <circle cx="52.56" cy="230.46" r="8.4" fill="#000"/>
    <path d="M48.4 230.46 H56.8 M52.56 226.2 V234.7" stroke="#fff" stroke-width="1.1"/>
    <!-- panel close -->
    <path d="M266.8 137.8 L279.6 150.6 M279.6 137.8 L266.8 150.6" stroke="#1a1a1a" stroke-width="1.15"/>
  </svg>
</div>
</body>
</html>
